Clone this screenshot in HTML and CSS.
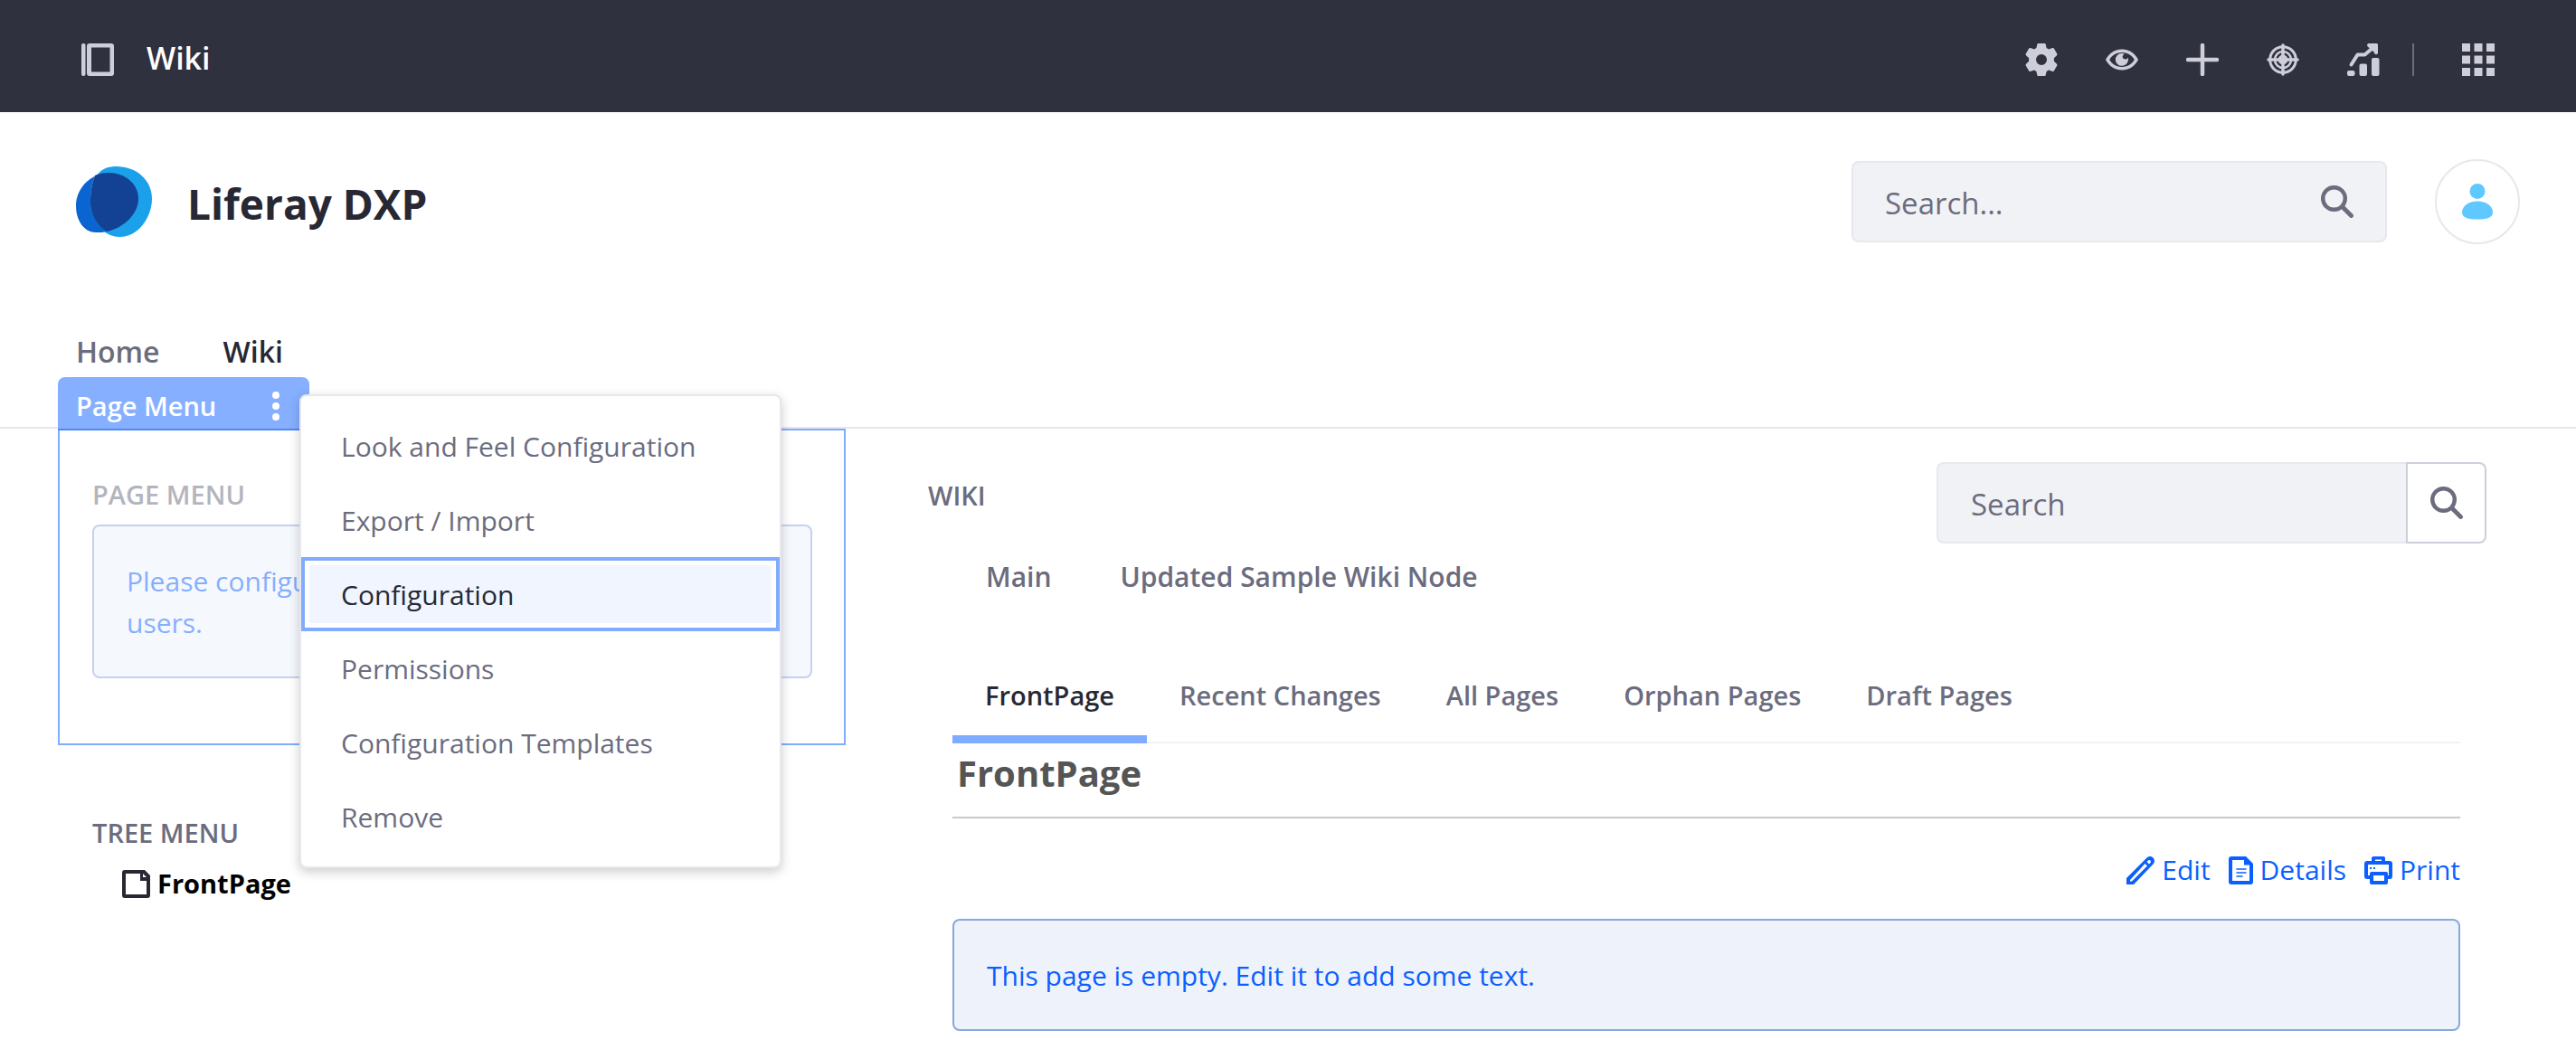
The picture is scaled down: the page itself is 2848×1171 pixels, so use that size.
FILE: index.html
```html
<!DOCTYPE html>
<html lang="en">
<head>
<meta charset="utf-8">
<meta name="viewport" content="width=device-width, initial-scale=1">
<title>Wiki - Liferay DXP</title>
<link rel="stylesheet" href="styles.css">
</head>
<body>
<svg class="sprite" aria-hidden="true">
  <symbol id="search" viewBox="0 0 36 36"><circle cx="14.500" cy="14.500" r="12.300" fill="none" stroke="currentColor" stroke-width="4.400"/><path d="M24 24l9.500 9.500" fill="none" stroke="currentColor" stroke-width="4.800" stroke-linecap="round"/></symbol>
</svg>

<div class="topbar">
  <button class="icon-btn" type="button" aria-label="Toggle product menu">
    <svg viewBox="0 0 36 36"><rect x="0" y="0" width="4.500" height="36" rx="2"/><path fill-rule="evenodd" d="M9 0h24a3 3 0 0 1 3 3v30a3 3 0 0 1-3 3H9a3 3 0 0 1-3-3V3a3 3 0 0 1 3-3zm2 4.500v27h20.500v-27z"/></svg>
  </button>
  <span class="topbar-title">Wiki</span>
  <div class="topbar-tools">
    <button class="icon-btn" type="button" aria-label="Configure page">
      <svg viewBox="0 0 36 36"><path fill-rule="evenodd" d="M14.500 0h7c.6 0 1.100.4 1.200 1l.9 4 2.400 1.400 4.300-1.300c.6-.2 1.200 0 1.500.5l3.500 6c.3.500.2 1.200-.3 1.600l-3.100 3.100v3.400l3.100 3.100c.5.400.6 1.100.3 1.600l-3.500 6c-.3.500-.9.700-1.500.5L26 29.600 23.600 31l-.9 4c-.1.600-.6 1-1.200 1h-7c-.6 0-1.100-.4-1.200-1l-.9-4L10 29.600l-4.300 1.300c-.6.2-1.200 0-1.500-.5l-3.500-6c-.3-.5-.2-1.200.3-1.600l3.100-3.100v-3.400L1 13.200c-.5-.4-.6-1.100-.3-1.600l3.500-6c.3-.5.9-.7 1.500-.5L10 6.400 12.400 5l.9-4c.1-.6.600-1 1.200-1zM18 12a6 6 0 1 0 0 12 6 6 0 0 0 0-12z"/></svg>
    </button>
    <button class="icon-btn" type="button" aria-label="Preview">
      <svg viewBox="0 0 36 36"><path fill-rule="evenodd" d="M18 6.500C27 6.500 33 12 36 18c-3 6-9 11.500-18 11.500S3 24 0 18C3 12 9 6.500 18 6.500zm0 3.500C11 10 6.500 14 4.200 18 6.500 22 11 26 18 26s11.500-4 13.800-8C29.500 14 25 10 18 10z"/><path d="M17.500 11c1.500 0 2.500.2 3.500.7-3 1.300-3.300 5 .3 5.800 1.700.3 3-.6 3.500-2 1 5-2.300 9.300-6.800 9.300a6.900 6.900 0 0 1-.5-13.800z"/></svg>
    </button>
    <button class="icon-btn" type="button" aria-label="Add">
      <svg viewBox="0 0 36 36"><path d="M18 2v32M2 18h32" fill="none" stroke="currentColor" stroke-width="4.500" stroke-linecap="round"/></svg>
    </button>
    <button class="icon-btn" type="button" aria-label="Simulation">
      <svg viewBox="0 0 36 36"><g fill="none" stroke="currentColor"><circle cx="18" cy="18" r="14.300" stroke-width="3"/><circle cx="18" cy="18" r="9" stroke-width="2.600"/><circle cx="18" cy="18" r="3.200" stroke-width="4.500"/><path d="M18 2v32M2 18h32" stroke-width="3.500" stroke-linecap="round"/></g></svg>
    </button>
    <button class="icon-btn" type="button" aria-label="Content performance">
      <svg viewBox="0 0 36 36"><rect x="0" y="30" width="8.500" height="6" rx="2"/><rect x="13.500" y="22.500" width="8.500" height="13.500" rx="2"/><rect x="27" y="16" width="8.500" height="20" rx="2"/><path d="M4.500 23.500l7-11h8L30 3.500" fill="none" stroke="currentColor" stroke-width="4" stroke-linecap="round" stroke-linejoin="round"/><path d="M24 0h8c1.500 0 2 .6 2 2v8c0 3-4 3-4 0l-7-6.300C21.500 2.500 22 0 24 0z"/></svg>
    </button>
    <span class="topbar-divider"></span>
    <button class="icon-btn" type="button" aria-label="Applications">
      <svg viewBox="0 0 36 36"><path d="M0 0h9v9H0zM13.500 0h9v9h-9zM27 0h9v9h-9zM0 13.500h9v9H0zM13.500 13.500h9v9h-9zM27 13.500h9v9h-9zM0 27h9v9H0zM13.500 27h9v9h-9zM27 27h9v9h-9z"/></svg>
    </button>
  </div>
</div>

<header class="site-header">
  <div class="site-row">
    <svg class="logo" viewBox="0 0 84 78" aria-hidden="true">
      <path fill="#1ba1ea" d="M44 0C67 0 84 15 84 36 84 55 70 78 48 78 32 78 16 62 16 40 16 15 24 0 44 0z"/>
      <path fill="#0a65d0" d="M36 7C19 7 0 22 0 44 0 60 9 73 22 73c5 0 8 0 12-1C24 66 16 54 16 40c0-11 2-22 5-30z"/>
      <path fill="#134194" d="M21 10c5-2 10-3 15-3 18 0 33 12 33 29 0 18-19 33-35 36C24 66 16 54 16 40c0-11 2-22 5-30z"/>
    </svg>
    <h1 class="site-name">Liferay DXP</h1>
    <form class="site-search">
      <input type="search" placeholder="Search..." aria-label="Search site">
      <button class="bare-btn" type="button" aria-label="Submit search"><svg><use href="#search"/></svg></button>
    </form>
    <button class="avatar" type="button" aria-label="User profile">
      <svg viewBox="0 0 34 40"><ellipse cx="17" cy="8.500" rx="8.500" ry="8.500"/><path d="M17 19.500c9.500 0 17 5 17 12.500 0 6-7.500 7.500-17 7.500S0 38 0 32c0-7.500 7.500-12.500 17-12.500z"/></svg>
    </button>
  </div>
  <nav class="site-nav">
    <a href="#">Home</a>
    <a class="current" href="#">Wiki</a>
  </nav>
</header>

<main class="columns">
  <div class="side">
    <section class="portlet">
      <div class="portlet-bar">
        <span>Page Menu</span>
        <button class="bare-btn" type="button" aria-label="Page Menu options">
          <svg viewBox="0 0 10 32"><circle cx="5" cy="4" r="4"/><circle cx="5" cy="16" r="4"/><circle cx="5" cy="28" r="4"/></svg>
        </button>
      </div>
      <div class="portlet-body">
        <h2 class="label">Page Menu</h2>
        <p class="alert">Please configure this to make it visible to all<br>users.</p>
      </div>
      <ul class="dropdown">
        <li><a href="#">Look and Feel Configuration</a></li>
        <li><a href="#">Export / Import</a></li>
        <li><a class="focused" href="#">Configuration</a></li>
        <li><a href="#">Permissions</a></li>
        <li><a href="#">Configuration Templates</a></li>
        <li><a href="#">Remove</a></li>
      </ul>
    </section>
    <section class="tree">
      <h2 class="label">Tree Menu</h2>
      <a class="tree-item" href="#">
        <svg viewBox="0 0 31 31"><path fill-rule="evenodd" d="M3 0h22l6 6v22a3 3 0 0 1-3 3H3a3 3 0 0 1-3-3V3a3 3 0 0 1 3-3zm1 4v23h23V12h-7V4zm19 0v4h4z"/></svg>
        FrontPage
      </a>
    </section>
  </div>

  <section class="wiki">
    <div class="wiki-top">
      <h2 class="label">Wiki</h2>
      <form class="wiki-search">
        <input type="search" placeholder="Search" aria-label="Search wiki">
        <button type="button" aria-label="Submit wiki search"><svg><use href="#search"/></svg></button>
      </form>
    </div>
    <div class="wiki-body">
      <nav class="nodes">
        <a href="#">Main</a>
        <a href="#">Updated Sample Wiki Node</a>
      </nav>
      <nav class="tabs">
        <a class="active" href="#">FrontPage</a>
        <a href="#">Recent Changes</a>
        <a href="#">All Pages</a>
        <a href="#">Orphan Pages</a>
        <a href="#">Draft Pages</a>
      </nav>
      <h1 class="page-title">FrontPage</h1>
      <div class="actions">
        <a href="#"><svg viewBox="0 0 31 31"><path fill-rule="evenodd" d="M0 24L22 2c3-3 6-2 7.500-.5S32 6 29 9L8 31H0zm4 2v1.500h2L23 10.500 20.500 8zM24 4.500L22.500 6 25 8.500 26.500 7c1.500-1.700-1-4-2.500-2.500z"/></svg>Edit</a>
        <a href="#"><svg class="doc" viewBox="0 0 27 31"><path fill-rule="evenodd" d="M3 0h16l8 8v20a3 3 0 0 1-3 3H3a3 3 0 0 1-3-3V3a3 3 0 0 1 3-3zm1 4v23h19V9.500h-6V4z"/><path d="M9 14h10M9 18h10M9 22h6" fill="none" stroke="currentColor" stroke-width="1.500" stroke-linecap="round"/></svg>Details</a>
        <a href="#"><svg viewBox="0 0 31 31"><path fill-rule="evenodd" d="M8 5V2a2 2 0 0 1 2-2h11a2 2 0 0 1 2 2v3h5a3 3 0 0 1 3 3v14a3 3 0 0 1-3 3h-2v4a2 2 0 0 1-2 2H8a2 2 0 0 1-2-2v-4H3a3 3 0 0 1-3-3V8a3 3 0 0 1 3-3zm4-1.500V5h7V3.500zM4 9v12h2v-2a2 2 0 0 1 2-2h16a2 2 0 0 1 2 2v2h1V9zm6 12v6h12v-6z"/><path d="M6 12h2v2H6zm4 0h2v2h-2z"/></svg>Print</a>
      </div>
      <p class="alert">This page is empty. Edit it to add some text.</p>
    </div>
  </section>
</main>
</body>
</html>
```
FILE: styles.css
```css
*, *::before, *::after { box-sizing: border-box; }

body {
  margin: 0;
  background: #fff;
  color: #6b6c7e;
  font-family: "Open Sans", "Noto Sans", sans-serif;
  font-size: 30px;
  line-height: 46px;
}

h1, h2, p, ul { margin: 0; padding: 0; }
ul { list-style: none; }
a { color: inherit; text-decoration: none; }
button, input { font: inherit; color: inherit; margin: 0; }
svg { display: block; fill: currentColor; }
.sprite { position: absolute; width: 0; height: 0; }

.bare-btn, .icon-btn {
  display: block;
  padding: 0;
  border: 0;
  background: none;
  color: inherit;
}

/* Top bar */
.topbar {
  display: flex;
  align-items: center;
  height: 124px;
  padding: 8px 90px 0;
  background: #30313f;
  color: #cdced9;
}
.icon-btn svg { width: 36px; height: 36px; }
.topbar-title {
  margin-left: 36px;
  padding-bottom: 4px;
  color: #fff;
  font-size: 34px;
  font-weight: 600;
}
.topbar-tools {
  display: flex;
  align-items: center;
  gap: 53px;
  margin-left: auto;
}
.topbar-divider {
  width: 2px;
  height: 36px;
  margin-left: -17px;
  background: #6b6c7e;
}

/* Site header */
.site-header {
  padding: 52px 62px 0 84px;
  border-bottom: 2px solid #e7e7ed;
}
.site-row { display: flex; align-items: center; }
.logo { width: 84px; height: 78px; }
.site-name {
  margin-left: 39px;
  padding-top: 4px;
  color: #272833;
  font-size: 46px;
  line-height: 90px;
}
.site-search {
  display: flex;
  align-items: center;
  width: 592px;
  height: 90px;
  margin-left: auto;
  padding: 0 35px;
  border: 2px solid #e7e7ed;
  border-radius: 8px;
  background: #f1f2f5;
  font-size: 33px;
}
.site-search input, .wiki-search input {
  flex: 1;
  min-width: 0;
  padding: 4px 0 0;
  border: 0;
  background: none;
}
input::placeholder { color: #6b6c7e; opacity: 1; }
.site-search svg, .wiki-search svg { width: 36px; height: 36px; }
.avatar {
  display: flex;
  align-items: center;
  justify-content: center;
  width: 94px;
  height: 94px;
  margin-left: 53px;
  padding: 0;
  border: 2px solid #e7e7ed;
  border-radius: 50%;
  background: #fff;
  color: #5fc8ff;
}
.avatar svg { width: 34px; height: 40px; }
.site-nav {
  display: flex;
  gap: 70px;
  padding: 96px 0 60px;
  font-size: 32px;
  font-weight: 600;
}
.site-nav .current { color: #272833; }

/* Columns */
.columns {
  display: grid;
  grid-template-columns: minmax(0, 871fr) minmax(0, 1797fr);
  gap: 52px;
  padding: 0 64px;
}
.label {
  font-size: 29px;
  font-weight: 600;
  line-height: 46px;
  text-transform: uppercase;
}
.alert {
  padding: 38px 36px 36px;
  border: 2px solid #89a7e0;
  border-radius: 8px;
  background: #edf2fb;
  color: #0b5fff;
}

/* Page menu portlet */
.portlet {
  position: relative;
  border: 2px solid #80acff;
}
.portlet-bar {
  position: absolute;
  bottom: 100%;
  left: -2px;
  display: flex;
  align-items: center;
  justify-content: space-between;
  width: 278px;
  height: 59px;
  padding: 6px 32px 0 20px;
  border-bottom: 2px solid #4c88ff;
  border-radius: 8px 8px 0 0;
  background: #86afff;
  color: #fff;
  font-size: 29px;
  font-weight: 600;
}
.portlet-bar svg { width: 10px; height: 32px; }
.portlet-body {
  padding: 48px 35px 72px 36px;
  opacity: 0.5;
}
.portlet-body .alert { margin-top: 10px; }

.dropdown {
  position: absolute;
  top: -40px;
  left: 265px;
  width: 533px;
  padding: 14px 0;
  border: 2px solid #e7e7ed;
  border-radius: 8px;
  background: #fff;
  box-shadow: 0 4px 12px rgba(39, 40, 51, 0.24);
}
.dropdown a {
  display: block;
  padding: 19px 44px 17px;
}
.dropdown .focused {
  background: #f0f5ff;
  color: #272833;
  box-shadow: inset 0 0 0 4px #80acff, inset 0 0 0 9px #fff;
}

/* Tree menu */
.tree { padding: 74px 38px 0; }
.tree-item {
  display: flex;
  align-items: center;
  gap: 8px;
  margin-top: 10px;
  padding-left: 33px;
  color: #000;
  font-size: 29px;
  font-weight: 700;
}
.tree-item svg { width: 31px; height: 31px; fill: #272833; }

/* Wiki */
.wiki { padding: 37px 35px 31px 39px; }
.wiki-top {
  display: flex;
  align-items: center;
  justify-content: space-between;
}
.wiki-top .label { padding-bottom: 16px; }
.wiki-search {
  display: flex;
  width: 608px;
  height: 90px;
  font-size: 33px;
}
.wiki-search input {
  padding: 4px 36px 0;
  border: 2px solid #e7e7ed;
  border-right: 0;
  border-radius: 8px 0 0 8px;
  background: #f1f2f5;
}
.wiki-search button {
  display: flex;
  align-items: center;
  justify-content: center;
  width: 89px;
  padding: 0;
  border: 2px solid #cdced9;
  border-radius: 0 8px 8px 0;
  background: #fff;
}
.wiki-body { padding: 0 29px 0 27px; }
.nodes {
  display: flex;
  gap: 76px;
  padding: 14px 37px 0;
  font-weight: 600;
}
.tabs {
  display: flex;
  margin-top: 61px;
  border-bottom: 2px solid #f1f2f5;
  font-size: 29px;
  font-weight: 600;
}
.tabs a {
  margin-bottom: -2px;
  padding: 24px 36px 21px;
  border-bottom: 9px solid transparent;
}
.tabs .active {
  border-color: #80acff;
  color: #272833;
}
.page-title {
  padding: 0 5px 16px;
  border-bottom: 2px solid #c8c9ca;
  color: #555;
  font-size: 40px;
  line-height: 65px;
}
.actions {
  display: flex;
  justify-content: flex-end;
  gap: 20px;
  padding: 34px 0 31px;
  color: #0b5fff;
}
.actions a {
  display: flex;
  align-items: center;
  gap: 8px;
}
.actions svg { width: 31px; height: 31px; }
.actions .doc { width: 27px; }
```
